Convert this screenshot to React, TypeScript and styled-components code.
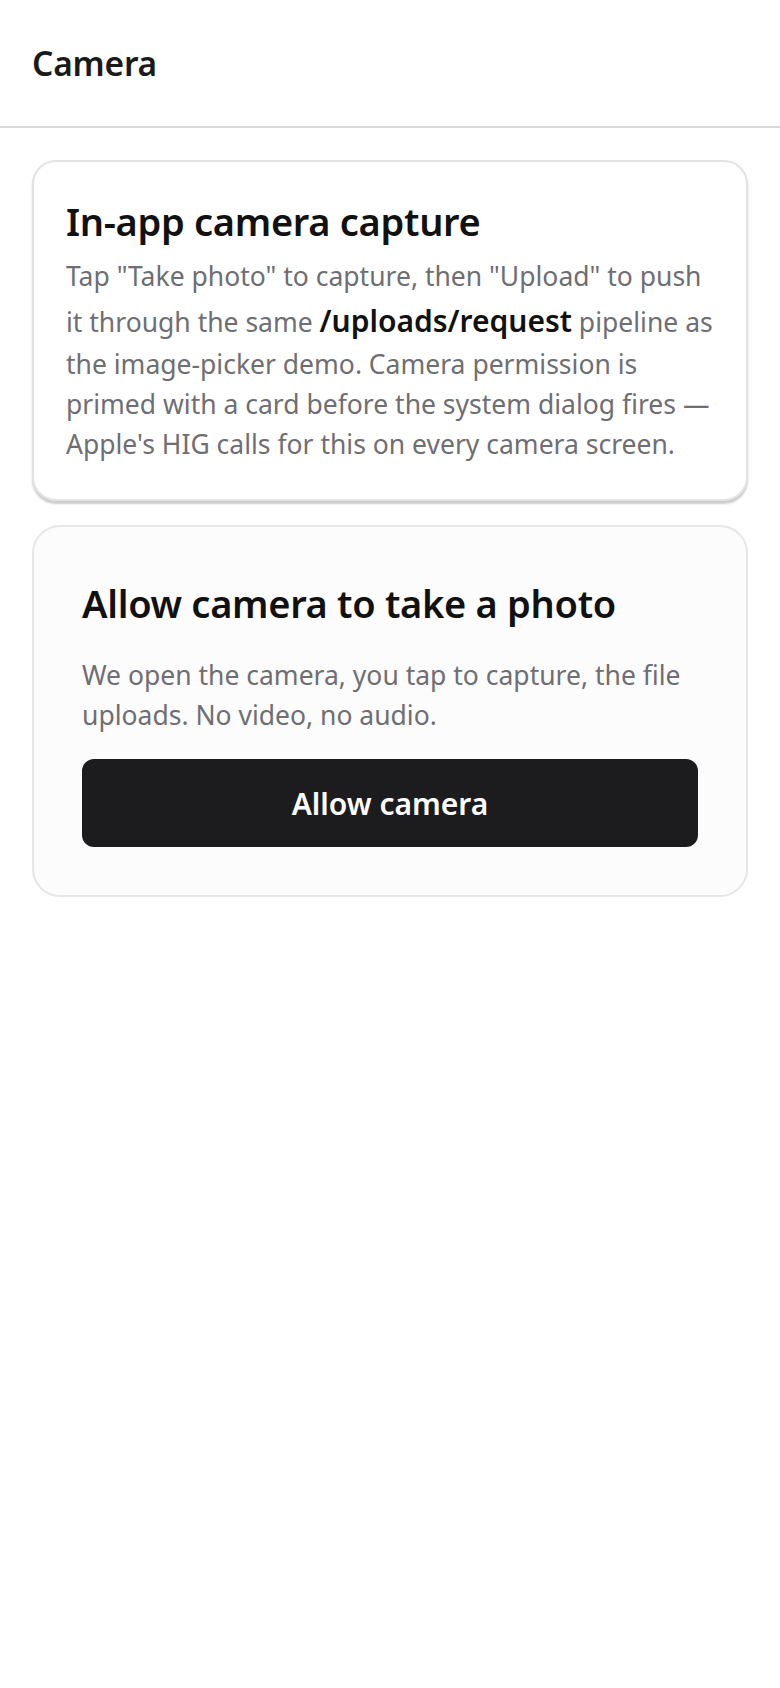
import React from "react";
import styled, { createGlobalStyle } from "styled-components";

const Global = createGlobalStyle`
  html, body { margin: 0; padding: 0; background: #ffffff; }
  body { font-family: "Noto Sans", "Open Sans", sans-serif; color: #111111; }
  * { box-sizing: border-box; }
`;

const Page = styled.div`
  min-height: 1688px;
  background: #ffffff;
`;

const Header = styled.header`
  height: 128px;
  display: flex;
  align-items: center;
  padding: 0 32px;
  border-bottom: 2px solid #d9d9d9;
`;

const HeaderTitle = styled.h1`
  margin: 0;
  font-size: 33.5px;
  font-weight: 600;
  color: #1a1a1a;
  letter-spacing: -0.2px;
`;

const Main = styled.main`
  display: flex;
  flex-direction: column;
  gap: 24px;
  padding: 32px;
`;

const InfoCard = styled.section`
  border: 2px solid #e3e3e3;
  border-radius: 24px;
  padding: 37px 28px 35px 32px;
  background: #ffffff;
  box-shadow: 0 3px 2px rgba(0, 0, 0, 0.2);
`;

const CardTitle = styled.h2`
  margin: 0;
  font-size: 38px;
  line-height: 1.2;
  font-weight: 600;
  color: #111111;
  letter-spacing: -0.3px;
`;

const BodyText = styled.p<{ $gap: number }>`
  margin: ${(p) => p.$gap}px 0 0;
  font-size: 26.5px;
  line-height: 40px;
  color: #6e6e73;
`;

const Code = styled.code`
  display: inline-block;
  margin: 5px 0 3px;
  font-family: inherit;
  font-weight: 600;
  font-size: 30px;
  line-height: 40px;
  color: #111111;
`;

const PromptCard = styled.section`
  border: 2px solid #e6e6e6;
  border-radius: 28px;
  padding: 54px 48px 48px;
  background: #fcfcfc;
  display: flex;
  flex-direction: column;
`;

const PrimaryButton = styled.button`
  margin-top: 24px;
  height: 88px;
  width: 100%;
  border: none;
  border-radius: 12px;
  background: #1c1c1e;
  color: #ffffff;
  font-family: inherit;
  font-size: 30px;
  font-weight: 600;
  cursor: pointer;
`;

export default function App() {
  return (
    <>
      <Global />
      <Page>
        <Header>
          <HeaderTitle>Camera</HeaderTitle>
        </Header>
        <Main>
          <InfoCard>
            <CardTitle>In-app camera capture</CardTitle>
            <BodyText $gap={11}>
              Tap "Take photo" to capture, then "Upload" to push it through the same{" "}
              <Code>/uploads/request</Code> pipeline as the image-picker demo. Camera
              permission is primed with a card before the system dialog fires — Apple's
              HIG calls for this on every camera screen.
            </BodyText>
          </InfoCard>
          <PromptCard>
            <CardTitle>Allow camera to take a photo</CardTitle>
            <BodyText $gap={29}>
              We open the camera, you tap to capture, the file uploads. No video, no
              audio.
            </BodyText>
            <PrimaryButton>Allow camera</PrimaryButton>
          </PromptCard>
        </Main>
      </Page>
    </>
  );
}
